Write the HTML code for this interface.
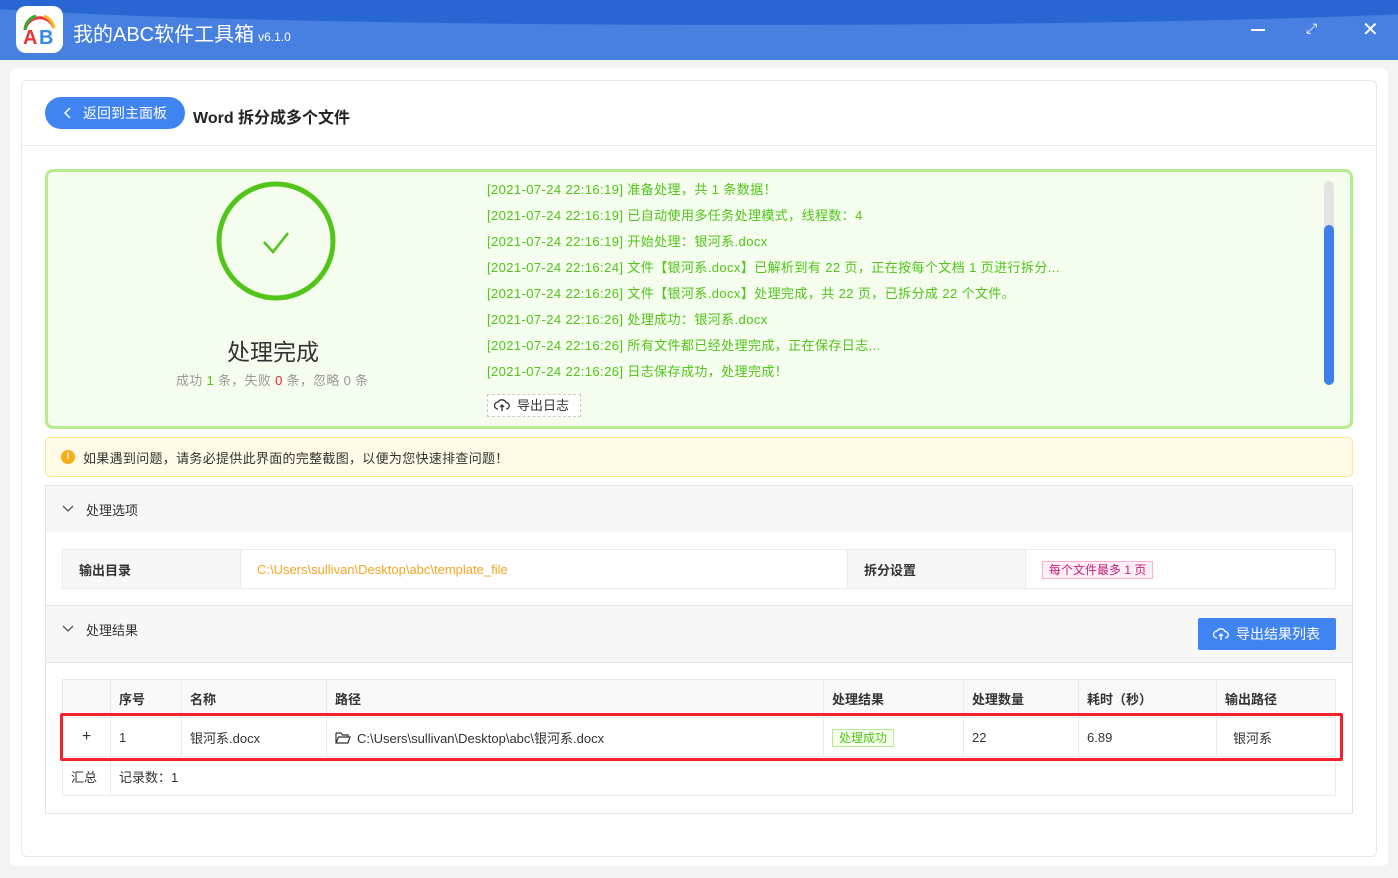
<!DOCTYPE html>
<html><head><meta charset="utf-8"><style>
*{margin:0;padding:0;box-sizing:border-box}
body{width:1398px;height:878px;overflow:hidden;background:#f3f3f3;font-family:"Liberation Sans","Noto Sans CJK SC",sans-serif;font-size:13px;color:#333;position:relative}
.abs{position:absolute}
.top{left:0;top:0;width:1398px;height:60px;background:#4780e0;overflow:hidden}
.top:before{content:"";position:absolute;left:-100px;top:-300px;width:1700px;height:325px;background:#2866d4;border-radius:0 0 50% 50%/0 0 30px 30px}
.logo{left:16px;top:6px;width:47px;height:47px;background:#fff;border-radius:10px}
.title{left:73px;top:18px;color:#fff;font-size:20px}
.title small{font-size:12px;margin-left:4px}
.card{left:10px;top:68px;width:1378px;height:798px;background:#fff;border-radius:6px}
.inner{left:21px;top:80px;width:1356px;height:777px;border:1px solid #e8e8e8;border-radius:6px}
.back{left:45px;top:97px;width:140px;height:32px;background:#4084f2;border-radius:16px;color:#fff;font-size:14px;line-height:32px;padding-left:38px}
.green{left:45px;top:169px;width:1308px;height:260px;background:#f4fdee;border:3px solid #b7eb8f;border-radius:8px}
.log{left:487px;color:#52c41a;font-size:13px;letter-spacing:0.4px}
.warn{left:45px;top:437px;width:1308px;height:40px;background:#fffbe6;border:1px solid #ffe58f;border-radius:5px}
.sec{left:45px;width:1308px;border:1px solid #e4e4e4;background:#f7f7f7}
td{border:1px solid #ebebeb;padding:0 8px;font-size:13px}
</style></head><body>
<div class="abs top"></div>
<div class="abs logo"><svg width="47" height="47" viewBox="0 0 47 47"><path d="M9 24 A15 15 0 0 1 38 22" fill="none" stroke="#e34" stroke-width="3"/><path d="M9 24 A15 15 0 0 1 20 10" fill="none" stroke="#3a3" stroke-width="3"/><path d="M28 10 A15 15 0 0 1 38 22" fill="none" stroke="#fb2" stroke-width="3"/><text x="7" y="38" font-size="20" font-weight="bold" fill="#e33" font-family="Liberation Sans">A</text><text x="23" y="38" font-size="20" font-weight="bold" fill="#38e" font-family="Liberation Sans">B</text></svg></div>
<div class="abs title">我的ABC软件工具箱<small>v6.1.0</small></div>
<div class="abs" style="left:1251px;top:29px;width:14px;height:2px;background:#fff"></div>
<div class="abs" style="left:1306px;top:20px;color:#fff;font-size:14px">⤢</div>
<div class="abs" style="left:1362px;top:17px;color:#fff;font-size:20px">✕</div>
<div class="abs card"></div>
<div class="abs inner"></div>
<div class="abs" style="left:22px;top:145px;width:1354px;height:1px;background:#e8e8e8"></div>
<div class="abs back">返回到主面板</div>
<svg class="abs" style="left:63px;top:106px" width="10" height="14"><path d="M7 2 L2 7 L7 12" fill="none" stroke="#fff" stroke-width="1.5"/></svg>
<div class="abs" style="left:193px;top:104px;font-size:16px;font-weight:bold;color:#222">Word 拆分成多个文件</div>
<div class="abs green"></div>
<svg class="abs" style="left:215px;top:180px" width="122" height="122"><circle cx="61" cy="61" r="57" fill="none" stroke="#52c41a" stroke-width="5"/><path d="M49 62 L58 72 L73 53" fill="none" stroke="#52c41a" stroke-width="2.5"/></svg>
<div class="abs" style="left:227px;top:333px;font-size:23px;color:#333">处理完成</div>
<div class="abs" style="left:176px;top:370px;color:#999;letter-spacing:0.3px">成功 <span style="color:#52c41a">1</span> 条，失败 <span style="color:#f5222d">0</span> 条，忽略 0 条</div>
<div class="abs log" style="top:179px">[2021-07-24 22:16:19] 准备处理，共 1 条数据！</div>
<div class="abs log" style="top:205px">[2021-07-24 22:16:19] 已自动使用多任务处理模式，线程数：4</div>
<div class="abs log" style="top:231px">[2021-07-24 22:16:19] 开始处理：银河系.docx</div>
<div class="abs log" style="top:257px">[2021-07-24 22:16:24] 文件【银河系.docx】已解析到有 22 页，正在按每个文档 1 页进行拆分...</div>
<div class="abs log" style="top:283px">[2021-07-24 22:16:26] 文件【银河系.docx】处理完成，共 22 页，已拆分成 22 个文件。</div>
<div class="abs log" style="top:309px">[2021-07-24 22:16:26] 处理成功：银河系.docx</div>
<div class="abs log" style="top:335px">[2021-07-24 22:16:26] 所有文件都已经处理完成，正在保存日志...</div>
<div class="abs log" style="top:361px">[2021-07-24 22:16:26] 日志保存成功，处理完成！</div>
<div class="abs" style="left:487px;top:394px;width:94px;height:23px;border:1px dashed #ccc;background:#fff;line-height:21px;padding-left:29px;color:#333">导出日志</div>
<svg class="abs" style="left:494px;top:398px" width="16" height="14"><path d="M4 11 A3.5 3.5 0 0 1 4 4 A4.5 4.5 0 0 1 12 4.5 A3 3 0 0 1 12 11" fill="none" stroke="#333" stroke-width="1.3"/><path d="M8 13 V7 M6 9 L8 7 L10 9" fill="none" stroke="#333" stroke-width="1.3"/></svg>
<div class="abs" style="left:1324px;top:181px;width:10px;height:204px;background:#e3e3e3;border-radius:5px"></div>
<div class="abs" style="left:1324px;top:225px;width:10px;height:160px;background:#3d80ea;border-radius:5px"></div>
<div class="abs warn"></div>
<div class="abs" style="left:61px;top:450px;width:14px;height:14px;border-radius:7px;background:#faad14;color:#fff;font-size:10px;text-align:center;line-height:14px;font-weight:bold">!</div>
<div class="abs" style="left:83px;top:448px;color:#333;letter-spacing:0.3px">如果遇到问题，请务必提供此界面的完整截图，以便为您快速排查问题！</div>
<div class="abs sec" style="top:485px;height:48px"></div>
<svg class="abs" style="left:62px;top:504px" width="12" height="10"><path d="M1 2 L6 7 L11 2" fill="none" stroke="#555" stroke-width="1.3"/></svg>
<div class="abs" style="left:86px;top:500px">处理选项</div>
<div class="abs" style="left:45px;top:532px;width:1308px;height:282px;border:1px solid #e4e4e4;border-top:none;background:#fff"></div>
<table class="abs" style="left:62px;top:549px;width:1274px;height:40px;border-collapse:collapse">
<tr><td style="width:178px;background:#f7f7f7;font-weight:bold;padding-left:16px">输出目录</td><td style="width:607px;color:#f5a623;padding-left:16px">C:\Users\sullivan\Desktop\abc\template_file</td><td style="width:178px;background:#f7f7f7;font-weight:bold;padding-left:16px">拆分设置</td><td style="padding-left:16px"><span style="border:1px solid #ffadd2;background:#fff0f6;color:#c41d7f;font-size:12px;padding:1px 6px">每个文件最多 1 页</span></td></tr></table>
<div class="abs sec" style="top:605px;height:58px"></div>
<svg class="abs" style="left:62px;top:624px" width="12" height="10"><path d="M1 2 L6 7 L11 2" fill="none" stroke="#555" stroke-width="1.3"/></svg>
<div class="abs" style="left:86px;top:620px">处理结果</div>
<div class="abs" style="left:1198px;top:618px;width:138px;height:32px;background:#4084f2;border-radius:2px;color:#fff;font-size:14px;line-height:32px;padding-left:38px">导出结果列表</div>
<svg class="abs" style="left:1213px;top:627px" width="16" height="14"><path d="M4 11 A3.5 3.5 0 0 1 4 4 A4.5 4.5 0 0 1 12 4.5 A3 3 0 0 1 12 11" fill="none" stroke="#fff" stroke-width="1.3"/><path d="M8 13 V7 M6 9 L8 7 L10 9" fill="none" stroke="#fff" stroke-width="1.3"/></svg>
<table class="abs" style="left:62px;top:679px;width:1274px;border-collapse:collapse">
<tr style="height:38px;background:#f9f9f9;font-weight:bold"><td style="width:48px"></td><td style="width:71px">序号</td><td style="width:145px">名称</td><td style="width:497px">路径</td><td style="width:140px">处理结果</td><td style="width:115px">处理数量</td><td style="width:138px">耗时（秒）</td><td>输出路径</td></tr>
<tr style="height:39px"><td style="text-align:center;font-size:16px">+</td><td>1</td><td>银河系.docx</td><td><svg width="16" height="12" style="vertical-align:-1px;margin-right:6px"><path d="M1 1 H6 L7.5 3 H13 V5 M1 1 V11 H13 L15 5 H3.5 L1 11" fill="none" stroke="#333" stroke-width="1.2"/></svg>C:\Users\sullivan\Desktop\abc\银河系.docx</td><td><span style="border:1px solid #b7eb8f;background:#f6ffed;color:#52c41a;font-size:12px;padding:1px 6px">处理成功</span></td><td>22</td><td>6.89</td><td style="padding-left:16px">银河系</td></tr>
<tr style="height:39px"><td>汇总</td><td colspan="7">记录数：1</td></tr></table>
<div class="abs" style="left:60px;top:713px;width:1283px;height:48px;border:3px solid #f5222d;border-radius:2px"></div>
</body></html>
